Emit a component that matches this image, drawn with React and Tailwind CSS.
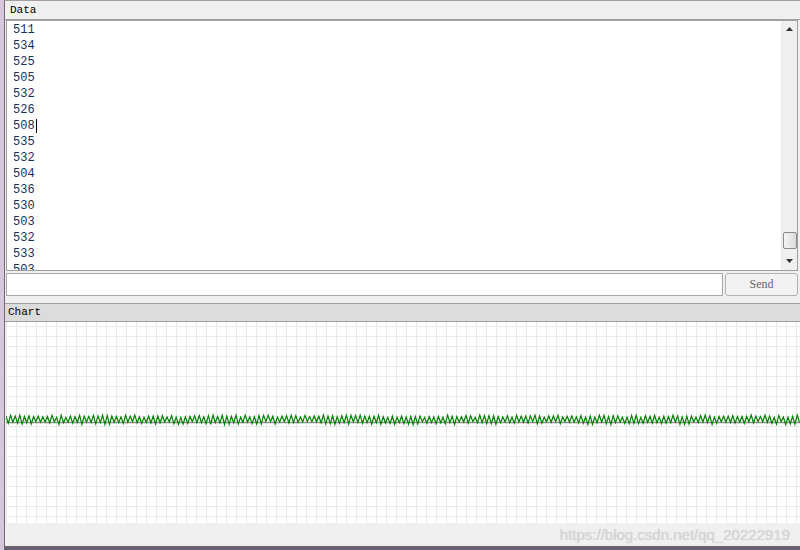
import React from "react";

const lines = ["511","534","525","505","532","526","508","535","532","504","536","530","503","532","533","503"];

function Wave() {
  const pts = [];
  let seed = 7;
  const rnd = () => { seed = (seed * 9301 + 49297) % 233280; return seed / 233280; };
  for (let x = 0, i = 0; x <= 794; x += 2.3, i++) {
    const hi = i % 2 === 0;
    const y = hi ? 93 + rnd() * 2.5 : 99.5 + rnd() * 3;
    pts.push(`${x.toFixed(1)},${y.toFixed(1)}`);
  }
  const v = [];
  for (let x = 0; x < 794; x += 10) v.push(x);
  const h = [];
  for (let y = 4; y < 201; y += 10) h.push(y);
  return (
    <svg width="794" height="201" className="block">
      <rect width="794" height="201" fill="#ffffff" />
      {v.map((x) => (
        <line key={"v" + x} x1={x + 0.5} y1="0" x2={x + 0.5} y2="201" stroke="#e9e9ec" strokeWidth="1" />
      ))}
      {h.map((y) => (
        <line key={"h" + y} x1="0" y1={y + 0.5} x2="794" y2={y + 0.5} stroke="#e9e9ec" strokeWidth="1" />
      ))}
      <line x1="0" y1="100.5" x2="794" y2="100.5" stroke="#8f8f8f" strokeWidth="1.5" />
      <polyline points={pts.join(" ")} fill="none" stroke="#008000" strokeWidth="1.2" />
    </svg>
  );
}

export default function App() {
  const mono = { fontFamily: '"Liberation Mono", "DejaVu Sans Mono", monospace' };
  return (
    <div className="w-[800px] h-[550px] flex bg-[#f0f0f0] overflow-hidden">
      <div className="w-[5px] h-full bg-[#d6c8da]" />
      <div className="flex-1 flex flex-col border-l border-[#6d6d6d] border-t border-t-[#a0a0a0] border-b-[4px] border-b-[#6a6070] relative">
        {/* Data header */}
        <div className="h-[19px] bg-[#f0f0f0] border-b border-[#a0a0a0] flex items-center pl-[5px] text-[11px] text-black" style={mono}>
          Data
        </div>
        {/* Data area */}
        <div className="h-[251px] ml-[1px] mr-[2px] border border-[#a0a0a0] bg-white flex">
          <div className="flex-1 pl-[6px] pt-[1px] overflow-hidden text-[12px] leading-[16px] text-[#1c2f5a]" style={mono}>
            {lines.map((l, i) => (
              <div key={i} className="flex items-center h-[16px]">
                <span>{l}</span>
                {i === 6 && <span className="inline-block w-[1px] h-[14px] bg-black ml-[1px]" />}
              </div>
            ))}
          </div>
          <div className="w-[16px] bg-[#f0f0f0] border-l border-[#e8e8e8] flex flex-col items-center">
            <div className="h-[17px] flex items-center justify-center">
              <svg width="7" height="4"><polygon points="0,4 3.5,0 7,4" fill="#333" /></svg>
            </div>
            <div className="flex-1" />
            <div className="w-[14px] h-[17px] rounded-[2px] border border-[#8a8a8a] bg-gradient-to-r from-[#f4f4f4] to-[#dcdcdc] mb-[4px]" />
            <div className="h-[17px] flex items-center justify-center">
              <svg width="7" height="4"><polygon points="0,0 3.5,4 7,0" fill="#333" /></svg>
            </div>
          </div>
        </div>
        {/* input row */}
        <div className="h-[23px] mt-[2px] ml-[1px] mr-[2px] flex gap-[2px]">
          <div className="flex-1 bg-white border border-[#a8a8a8]" />
          <div className="w-[73px] rounded-[3px] border border-[#b0b0b0] bg-[#f2f2f2] flex items-center justify-center text-[12px] text-[#666]" style={{ fontFamily: '"Liberation Serif", serif' }}>
            Send
          </div>
        </div>
        <div className="h-[8px] border-b border-[#a0a0a0]" />
        {/* Chart header */}
        <div className="h-[18px] bg-[#dcdcdc] border-b border-[#a0a0a0] flex items-center pl-[3px] text-[11px] text-black" style={mono}>
          Chart
        </div>
        <div className="h-[201px] ml-[1px]">
          <Wave />
        </div>
        <div className="flex-1 bg-[#f0f0f0] flex justify-end items-start pr-[10px] pt-[1px]">
          <span className="text-[15px] text-[#d8d8d8]" style={{ fontFamily: '"Liberation Sans", Arial, sans-serif', textShadow: "0 0 1px #c8c8c8" }}>
            https://blog.csdn.net/qq_20222919
          </span>
        </div>
      </div>
    </div>
  );
}
